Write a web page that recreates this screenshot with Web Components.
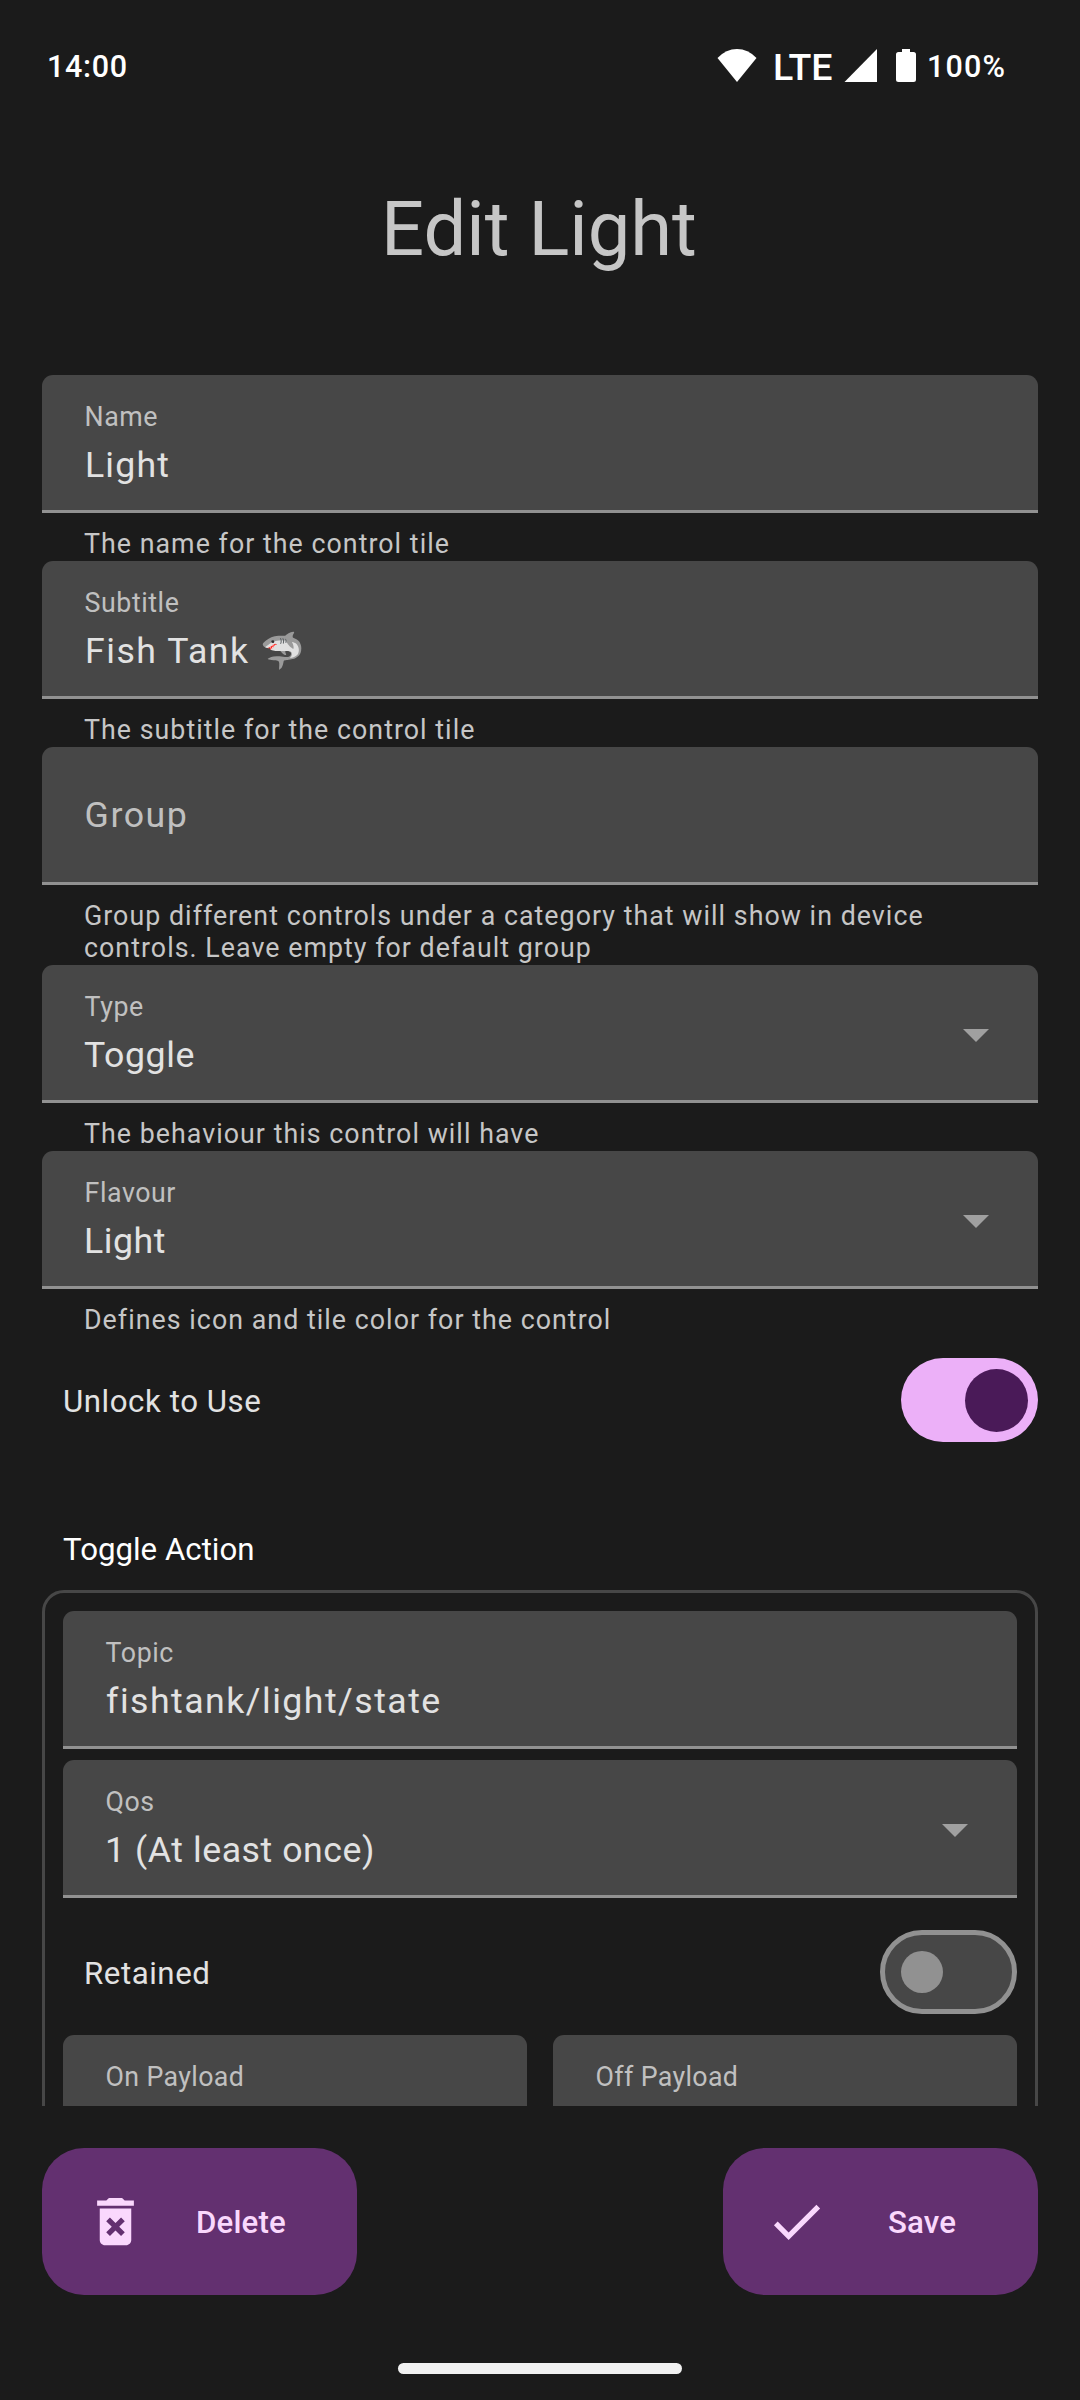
<!DOCTYPE html>
<html lang="en">
<head>
<meta charset="utf-8">
<title>Edit Light</title>
<style>
  html, body { margin: 0; background: #1b1b1b; }
  body { width: 1080px; height: 2400px; overflow: hidden; font-family: Roboto, "Noto Color Emoji", sans-serif; }
</style>
</head>
<body>
<edit-screen></edit-screen>

<template id="t-screen">
  <style>
    :host { display: flex; flex-direction: column; width: 1080px; height: 2400px; background: #1b1b1b; overflow: hidden; }
    h1 { margin: 0; padding: 53px 2px 0 0; height: 190px; font-size: 75.9px; line-height: 90px; font-weight: 400; color: #c6c6c6; text-align: center; }
    main { height: 1731px; overflow: hidden; padding: 0 42px; display: flex; flex-direction: column; }
    main > * { flex: none; }
    .unlock { margin-top: 21px; padding-left: 21px; }
    .section { margin: 86px 0 0 21px; height: 62px; font-size: 31.24px; line-height: 44px; color: #fff; }
    .card { box-sizing: border-box; height: 700px; border: 3px solid #474747; border-radius: 22px; padding: 18px; display: flex; flex-direction: column; }
    .card > * { flex: none; }
    .qos { margin-top: 11px; }
    .retained { margin-top: 32px; padding-left: 21px; }
    .pair { margin-top: 21px; display: grid; grid-template-columns: 1fr 1fr; gap: 26px; }
    footer { display: flex; justify-content: space-between; padding: 42px 42px 0; height: 214px; box-sizing: border-box; }
    .nav { width: 284px; height: 11px; border-radius: 6px; background: #f1f1f1; margin: 43px auto 0; }
  </style>
  <status-bar></status-bar>
  <h1>Edit Light</h1>
  <main>
    <form-field label="Name" value="Light" style="--ls:1.15px">The name for the control tile</form-field>
    <form-field label="Subtitle" value="Fish Tank 🦈" style="--ls:1.5px">The subtitle for the control tile</form-field>
    <form-field placeholder="Group">Group different controls under a category that will show in device controls. Leave empty for default group</form-field>
    <form-field label="Type" value="Toggle" menu>The behaviour this control will have</form-field>
    <form-field label="Flavour" value="Light" menu>Defines icon and tile color for the control</form-field>
    <switch-row class="unlock" on>Unlock to Use</switch-row>
    <div class="section">Toggle Action</div>
    <div class="card">
      <form-field label="Topic" value="fishtank/light/state" bare style="--ls:1.47px"></form-field>
      <form-field class="qos" label="Qos" value="1 (At least once)" menu bare></form-field>
      <switch-row class="retained">Retained</switch-row>
      <div class="pair">
        <form-field label="On Payload" bare style="--label-ls:.35px"></form-field>
        <form-field label="Off Payload" bare style="--label-ls:.35px"></form-field>
      </div>
    </div>
  </main>
  <footer>
    <action-button>
      <svg slot="icon" viewBox="0 0 24 24"><path d="M6 19c0 1.1.9 2 2 2h8c1.1 0 2-.9 2-2V7H6v12zm2.46-7.12l1.41-1.41L12 12.59l2.12-2.12 1.41 1.41L13.41 14l2.12 2.12-1.41 1.41L12 15.41l-2.12 2.12-1.41-1.41L10.59 14l-2.13-2.12zM15.5 4l-1-1h-5l-1 1H5v2h14V4z"/></svg>
      Delete
    </action-button>
    <action-button>
      <svg slot="icon" viewBox="0 0 24 24"><path d="M9 16.17 4.83 12l-1.42 1.41L9 19 21 7l-1.41-1.41z"/></svg>
      Save
    </action-button>
  </footer>
  <div class="nav"></div>
</template>

<template id="t-status">
  <style>
    :host { display: flex; align-items: flex-start; height: 132px; box-sizing: border-box; padding: 48px 73px 0 47px; color: #fff; font-weight: 500; }
    span { font-size: 30.5px; line-height: 38px; }
    .time { letter-spacing: .7px; margin-right: auto; }
    svg { display: block; fill: #fff; }
    .lte { font-size: 37.5px; width: 58px; margin: 0 13px 0 16px; white-space: nowrap; letter-spacing: -.1px; }
    .pct { letter-spacing: 1.2px; margin-left: 10px; width: 80px; white-space: nowrap; }
  </style>
  <span class="time">14:00</span>
  <svg width="40" height="36" viewBox="0 0 40 36"><path d="M20 34 .5 10Q9 1 20 1t19.500 9z"/></svg>
  <span class="lte">LTE</span>
  <svg width="34" height="36" viewBox="0 0 34 36"><path d="M33 1v33H.5z"/></svg>
  <svg width="22" height="36" viewBox="0 0 22 36" style="margin-left:17px"><path d="M7 1h8v3h3.500a2.500 2.500 0 0 1 2.500 2.500v25a2.500 2.500 0 0 1-2.500 2.500h-15a2.500 2.500 0 0 1-2.500-2.500v-25a2.500 2.500 0 0 1 2.500-2.500H7z"/></svg>
  <span class="pct">100%</span>
</template>

<template id="t-field">
  <style>
    :host { display: block; }
    .box { box-sizing: border-box; height: 138px; display: flex; align-items: center; padding: 0 49.500px 0 42px; background: #474747; border-bottom: 3px solid #919191; border-radius: 11px 11px 0 0; }
    .text { flex: 1; height: 135px; padding-top: 26px; box-sizing: border-box; }
    .label { height: 32px; font-size: 26.775px; line-height: 32px; letter-spacing: var(--label-ls, .55px); color: #c0c0c0; margin-left: .6px; }
    .value { height: 42px; margin: 11px 0 0 1px; font-size: 35.7px; line-height: 42px; letter-spacing: var(--ls, .55px); color: #e2e2e2; white-space: nowrap; }
    :host([menu]) .value { margin-left: 0; }
    .placeholder { height: 42px; margin: 21px 0 0 .6px; font-size: 35.7px; line-height: 42px; letter-spacing: 1.5px; color: #c0c0c0; }
    svg { display: none; width: 26px; height: 13px; fill: #a0a0a0; margin-top: 6px; }
    :host([menu]) svg { display: block; }
    .help { padding: 15px 42px 1px; font-size: 26.775px; line-height: 32px; letter-spacing: 1.04px; color: #c6c6c6; }
    :host([bare]) .help { display: none; }
  </style>
  <div class="box">
    <div class="text"></div>
    <svg viewBox="0 0 26 13"><path d="M0 0h26L13 13z"/></svg>
  </div>
  <div class="help"><slot></slot></div>
</template>

<template id="t-switch">
  <style>
    :host { display: flex; align-items: center; justify-content: space-between; height: 84px; font-size: 31.24px; letter-spacing: .55px; color: #e2e2e2; }
    .track { box-sizing: border-box; width: 137px; height: 84px; border-radius: 42px; border: 5px solid #919191; background: #474747; display: flex; align-items: center; padding: 0 16px; }
    .thumb { width: 42px; height: 42px; border-radius: 50%; background: #919191; }
    :host([on]) .track { border: 0; background: #ecb0f8; justify-content: flex-end; padding: 0 10.500px; }
    :host([on]) .thumb { width: 63px; height: 63px; background: #4a1a58; }
    .t { padding-top: 4px; line-height: 38px; }
  </style>
  <div class="t"><slot></slot></div>
  <div class="track"><div class="thumb"></div></div>
</template>

<template id="t-button">
  <style>
    :host { box-sizing: border-box; width: 315px; height: 147px; border-radius: 42px; background: #633070; color: #fad8fd; display: flex; align-items: center; padding: 0 22px 0 42px; font-size: 31.24px; font-weight: 500; letter-spacing: .15px; }
    ::slotted(svg) { width: 63px; height: 63px; fill: #fad8fd; display: block; }
    span { flex: 1; text-align: center; line-height: 38px; padding-top: 2px; }
  </style>
  <slot name="icon"></slot>
  <span><slot></slot></span>
</template>

<script>
  const stamp = (el, id) => {
    const root = el.attachShadow({ mode: 'open' });
    root.append(document.getElementById(id).content.cloneNode(true));
    return root;
  };
  customElements.define('status-bar', class extends HTMLElement {
    constructor() { super(); stamp(this, 't-status'); }
  });
  customElements.define('form-field', class extends HTMLElement {
    connectedCallback() {
      if (this.shadowRoot) return;
      const text = stamp(this, 't-field').querySelector('.text');
      for (const name of ['label', 'value', 'placeholder']) {
        if (!this.hasAttribute(name)) continue;
        const line = document.createElement('div');
        line.className = name;
        line.textContent = this.getAttribute(name);
        text.append(line);
      }
    }
  });
  customElements.define('switch-row', class extends HTMLElement {
    constructor() { super(); stamp(this, 't-switch'); }
  });
  customElements.define('action-button', class extends HTMLElement {
    constructor() { super(); stamp(this, 't-button'); }
  });
  customElements.define('edit-screen', class extends HTMLElement {
    constructor() { super(); stamp(this, 't-screen'); }
  });
</script>
</body>
</html>
